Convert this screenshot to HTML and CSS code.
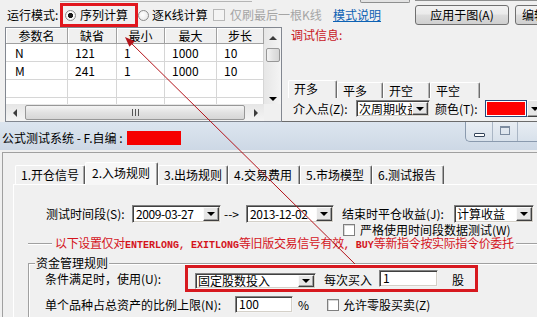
FILE: index.html
```html
<!DOCTYPE html>
<html lang="zh-CN">
<head>
<meta charset="utf-8">
<title>公式测试系统</title>
<link rel="stylesheet" href="styles.css">
</head>
<body>
<div class="screen">
  <div class="bgwin">
    <div class="topstrip">
      <span class="ts1"></span>
      <span class="ts2"></span>
      <span class="ts3"></span>
    </div>
    <div class="moderow">
      <span class="mode-lbl">运行模式:</span>
      <span class="hl-mode"><span class="radio on"></span><span class="radio-txt">序列计算</span></span>
      <span class="radio"></span><span class="txt-k">逐K线计算</span>
      <span class="check dis"></span><span class="txt-dis">仅刷最后一根K线</span>
      <span class="link">模式说明</span>
      <span class="btn btn-apply">应用于图(A)</span>
      <span class="btn btn-edit">编辑(E)</span>
    </div>
    <div class="mainrow">
      <div class="grid">
        <div class="g-top">
          <div class="g-cells">
            <div class="g-row g-head">
              <span class="c c1">参数名</span><span class="c c2">缺省</span><span class="c c3">最小</span><span class="c c4">最大</span><span class="c c5">步长</span>
            </div>
            <div class="g-row">
              <span class="c c1">N</span><span class="c c2">121</span><span class="c c3">1</span><span class="c c4">1000</span><span class="c c5">10</span>
            </div>
            <div class="g-row">
              <span class="c c1">M</span><span class="c c2">241</span><span class="c c3">1</span><span class="c c4">1000</span><span class="c c5">10</span>
            </div>
            <div class="g-row">
              <span class="c c1"></span><span class="c c2"></span><span class="c c3"></span><span class="c c4"></span><span class="c c5"></span>
            </div>
            <div class="g-row">
              <span class="c c1"></span><span class="c c2"></span><span class="c c3"></span><span class="c c4"></span><span class="c c5"></span>
            </div>
          </div>
          <div class="vscroll">
            <span class="sb-btn sb-up"><span class="tri up"></span></span>
            <span class="vthumb"></span>
            <span class="sb-fill"></span>
            <span class="sb-btn sb-down"><span class="tri down"></span></span>
          </div>
        </div>
        <div class="g-bottom">
          <div class="hscroll">
            <span class="sb-btn"><span class="tri left"></span></span>
            <span class="hthumb"><span class="grip"></span></span>
            <span class="sb-fill"></span>
            <span class="sb-btn"><span class="tri right"></span></span>
          </div>
          <span class="corner"></span>
        </div>
      </div>
      <div class="dbg">
        <div class="dbg-title">调试信息:</div>
        <div class="stabs">
          <span class="stab st1 sel">开多</span><span class="stab st2">平多</span><span class="stab st3">开空</span><span class="stab st4">平空</span>
        </div>
        <div class="dbg-row">
          <span class="lbl-jr">介入点(Z):</span>
          <span class="combo cb-jr"><span class="cb-text clip">次周期收益</span><span class="cb-btn"><span class="tri down"></span></span></span>
          <span class="lbl-color">颜色(T):</span>
          <span class="colorbox"><span class="swatch"></span></span>
          <span class="cb-btn solo"><span class="tri down"></span></span>
        </div>
      </div>
    </div>
  </div>

  <div class="dlg">
    <div class="titlebar">
      <div class="title"><span>公式测试系统 - F.自编 :</span><span class="title-red"></span></div>
      <div class="winbtns">
        <span class="wb wb-min"><i></i></span>
        <span class="wb wb-max"><i></i></span>
        <span class="wb wb-close"></span>
      </div>
    </div>
    <div class="dlg-body">
      <div class="frame">
        <div class="tabs">
          <span class="tab t1">1.开仓信号</span>
          <span class="tab t2 sel">2.入场规则</span>
          <span class="tab t3">3.出场规则</span>
          <span class="tab t4">4.交易费用</span>
          <span class="tab t5">5.市场模型</span>
          <span class="tab t6">6.测试报告</span>
        </div>
        <div class="panel">
          <div class="row-a">
            <span class="lbl-period">测试时间段(S):</span>
            <span class="combo cb-date1"><span class="cb-text num">2009-03-27</span><span class="cb-btn"><span class="tri down"></span></span></span>
            <span class="arrow-txt">--&gt;</span>
            <span class="combo cb-date2"><span class="cb-text num">2013-12-02</span><span class="cb-btn"><span class="tri down"></span></span></span>
            <span class="lbl-end">结束时平仓收益(J):</span>
            <span class="combo cb-end"><span class="cb-text">计算收益</span><span class="cb-btn"><span class="tri down"></span></span></span>
          </div>
          <div class="row-b">
            <span class="check"></span><span class="txt-strict">严格使用时间段数据测试(W)</span>
          </div>
          <div class="row-c">
            <span class="etch etch-l"></span>
            <span class="red-note">以下设置仅对<b class="lat">ENTERLONG, EXITLONG</b>等旧版交易信号有效<b class="lat">, BUY</b>等新指令按实际指令价委托</span>
            <span class="etch etch-r"></span>
          </div>
          <div class="group">
            <div class="group-title">资金管理规则</div>
            <div class="row-d">
              <span class="lbl-use">条件满足时，使用(U):</span>
              <div class="hl-money">
                <span class="combo cb-mode"><span class="cb-text">固定股数投入</span><span class="cb-btn"><span class="tri down"></span></span></span>
                <span class="txt-buy">每次买入</span>
                <span class="edit ed-qty">1</span>
                <span class="txt-gu">股</span>
              </div>
            </div>
            <div class="row-e">
              <span class="lbl-ratio">单个品种占总资产的比例上限(N):</span>
              <span class="edit ed-ratio">100</span>
              <span class="txt-pct">%</span>
              <span class="check ck-odd"></span>
              <span class="txt-odd">允许零股买卖(Z)</span>
            </div>
          </div>
        </div>
      </div>
    </div>
  </div>

  <svg class="arrow" width="537" height="317" viewBox="0 0 537 317">
    <line x1="355" y1="264" x2="130" y2="42" stroke="#b3141b" stroke-width="1"/>
    <polygon points="125,37 129.4,46.8 134.8,41.3" fill="#b3141b"/>
  </svg>
</div>
</body>
</html>
```
FILE: styles.css
```css
* { box-sizing: border-box; margin: 0; padding: 0; }
html, body { width: 537px; height: 317px; overflow: hidden; }
body {
  background: #f0f0f0;
  font: 12px/14px "Noto Sans CJK SC", "Noto Sans", sans-serif;
  color: #000;
}
.screen { position: relative; width: 537px; height: 317px; overflow: hidden; background: #f0f0f0; }

/* ---------- background window ---------- */
.bgwin { height: 122px; }
.topstrip { display: flex; height: 3px; }
.ts1 { flex: none; margin-left: 60px; width: 192px; height: 2px; border-bottom: 1px solid #b5b5b5; }
.ts2 { flex: none; margin-left: 108px; width: 50px; height: 3px; border: 1px solid #8e8f8f; border-top: 0; background: #e3e3e3; border-radius: 0 0 2px 2px; }
.ts3 { margin-left: 5px; flex: 1; height: 1px; border-bottom: 1px solid #8e8f8f; }

.moderow { display: flex; align-items: center; height: 24px; white-space: nowrap; }
.moderow > * { flex: none; }
.mode-lbl { margin-left: 7px; width: 53px; }
.hl-mode { display: flex; align-items: center; width: 78px; height: 24px; border: 3px solid #e1171e; padding-left: 2px; }
.radio {
  flex: none; width: 11px; height: 11px; border-radius: 50%;
  border: 1px solid #8b8b8b;
  background: radial-gradient(circle at 40% 40%, #ffffff, #e4e4e4);
}
.radio.on { background: radial-gradient(circle, #1b1b1b 0 2.3px, #ffffff 2.9px, #e4e4e4); }
.radio-txt { margin-left: 4px; }
.txt-k { margin-left: 3px; width: 61px; }
.check { flex: none; width: 12px; height: 12px; border: 1px solid #7f7f7f; background: #fff; box-shadow: inset 1px 1px 0 #d8d8d8; }
.check.dis { border-color: #b8b8b8; background: #f4f4f4; box-shadow: none; }
.txt-dis { margin-left: 5px; width: 103px; color: #a5a5a5; }
.link { width: 82px; color: #0d62b4; text-decoration: underline; }
.btn {
  display: flex; align-items: center; justify-content: center;
  height: 20px; border: 1px solid #707070; border-radius: 3px;
  background: linear-gradient(#f2f2f2, #ebebeb 45%, #dddddd 50%, #cfcfcf);
}
.btn-apply { width: 94px; }
.btn-edit { margin-left: 6px; width: 60px; justify-content: flex-start; padding-left: 6px; }

.mainrow { display: flex; height: 95px; }
.grid { flex: none; margin-left: 5px; width: 277px; height: 95px; border: 1px solid #828790; display: flex; flex-direction: column; background: #fff; }
.g-top { display: flex; height: 76px; }
.g-cells { flex: none; width: 258px; overflow: hidden; }
.g-row { display: flex; height: 18px; }
.c {
  flex: none; height: 100%;
  border-right: 1px solid #d6d6d6; border-bottom: 1px solid #d6d6d6;
  padding-left: 7px; line-height: 17px; white-space: nowrap;
}
.c1 { width: 62px; padding-left: 9px; }
.c2 { width: 49px; }
.c3 { width: 48px; }
.c4 { width: 52px; }
.c5 { width: 47px; }
.g-head { height: 16px; }
.g-head .c {
  background: #f0f0f0; box-shadow: inset 1px 1px 0 #fff;
  border-right: 1px solid #a0a0a0; border-bottom: 1px solid #a0a0a0;
  padding: 0; text-align: center; line-height: 15px;
}

.vscroll { flex: none; width: 17px; display: flex; flex-direction: column; background: linear-gradient(90deg, #e6e6e6, #f4f4f4); }
.sb-btn { flex: none; width: 17px; height: 17px; display: flex; align-items: center; justify-content: center; }
.sb-up { padding-top: 3px; }
.sb-down { padding-top: 6px; }
.vthumb {
  flex: none; margin: 3px 1px 0 2px; height: 14px;
  border: 1px solid #979797; border-radius: 2px;
  background: linear-gradient(90deg, #f4f4f4, #e2e2e2 50%, #d6d6d6);
}
.sb-fill { flex: 1; }
.g-bottom { display: flex; height: 17px; }
.hscroll { flex: none; width: 258px; display: flex; background: linear-gradient(#e6e6e6, #f4f4f4); }
.hthumb {
  flex: none; margin: 1px 0 0 2px; width: 220px; height: 15px;
  border: 1px solid #979797; border-radius: 2px;
  background: linear-gradient(#f4f4f4, #e2e2e2 50%, #d6d6d6);
  display: flex; align-items: center; justify-content: center;
}
.grip { width: 7px; height: 7px; background: repeating-linear-gradient(90deg, #555 0 1px, transparent 1px 3px); }
.corner { flex: none; width: 17px; background: #f0f0f0; }

.tri { width: 0; height: 0; display: block; }
.tri.up { border-left: 4px solid transparent; border-right: 4px solid transparent; border-bottom: 4px solid #3c3c3c; }
.tri.down { border-left: 4px solid transparent; border-right: 4px solid transparent; border-top: 4px solid #000; }
.tri.left { border-top: 4px solid transparent; border-bottom: 4px solid transparent; border-right: 4px solid #3c3c3c; }
.tri.right { border-top: 4px solid transparent; border-bottom: 4px solid transparent; border-left: 4px solid #3c3c3c; }

.dbg { flex: 1; height: 95px; border-bottom: 1px solid #6b6b6b; }
.dbg-title { margin-top: 1px; padding-left: 9px; color: #c8161d; }
.stabs { display: flex; align-items: flex-end; height: 18px; margin-top: 38px; padding-left: 6px; }
.stab {
  flex: none; height: 16px; border-left: 1px solid #fff; border-top: 1px solid #fff;
  border-right: 1px solid #6e6e6e; box-shadow: inset -1px 0 0 #b4b4b4;
  border-radius: 2px 2px 0 0; padding-left: 5px; line-height: 15px;
}
.stab.sel { height: 18px; line-height: 16px; }
.st1 { width: 49px; }
.st2 { width: 46px; }
.st3 { width: 47px; }
.st4 { width: 50px; }
.dbg-row { display: flex; align-items: center; height: 19px; margin-top: 1px; white-space: nowrap; }
.dbg-row > * { flex: none; }
.lbl-jr { margin-left: 11px; width: 63px; }
.lbl-color { margin-left: 5px; width: 50px; }
.cb-jr { width: 74px; height: 17px; }
.colorbox { width: 42px; height: 17px; border: 1px solid #24477a; padding: 1px; background: #fff; display: flex; }
.swatch { flex: 1; background: #ff0000; }
.cb-btn.solo { height: 17px; }

/* ---------- controls ---------- */
.combo {
  display: flex; flex: none; background: #fff; overflow: hidden;
  border: 1px solid; border-color: #828282 #f4f4f4 #f4f4f4 #828282;
  box-shadow: inset 1px 1px 0 #404040, inset -1px -1px 0 #d4d0c8;
  padding: 1px;
}
.cb-text { flex: 1; min-width: 0; white-space: nowrap; padding-left: 1px; line-height: 13px; }
.cb-text.clip { overflow: hidden; }
.cb-text.num { letter-spacing: -0.4px; }
.cb-btn {
  flex: none; width: 16px; display: flex; align-items: center; justify-content: center;
  background: #e6e6e6; border: 1px solid; border-color: #fafafa #404040 #404040 #fafafa;
  box-shadow: inset -1px -1px 0 #a0a0a0;
}
.edit {
  flex: none; background: #fff; padding-left: 3px; line-height: 14px;
  border: 1px solid; border-color: #828282 #f4f4f4 #f4f4f4 #828282;
  box-shadow: inset 1px 1px 0 #404040, inset -1px -1px 0 #d4d0c8;
}

/* ---------- dialog ---------- */
.dlg { position: absolute; left: 0; top: 122px; width: 537px; height: 195px; background: #f0f0f0; display: flex; flex-direction: column; }
.titlebar { flex: none; display: flex; height: 28px; background: linear-gradient(#dce5ef, #cdd8e5); }
.title { flex: none; display: flex; align-items: center; padding: 3px 0 0 2px; white-space: nowrap; }
.title-red { width: 54px; height: 14px; background: #f60000; margin-left: 4px; }
.winbtns {
  flex: none; margin-left: auto; display: flex; width: 72px; height: 20px;
  border: 1px solid #8a9aae; border-top: 0; border-right: 0; border-radius: 0 0 0 5px;
  background: linear-gradient(#e8edf3, #d8e1eb);
}
.wb { flex: none; display: flex; align-items: center; justify-content: center; border-right: 1px solid #aab6c5; }
.wb i { display: block; }
.wb-min { width: 27px; }
.wb-min i { width: 11px; height: 4px; border: 1px solid #33445a; border-radius: 1px; background: #fff; margin-top: 6px; }
.wb-max { width: 25px; }
.wb-max i { width: 10px; height: 9px; border: 1px solid #7d8ca0; border-top-width: 2px; margin-top: -2px; }
.wb-close { flex: 1; border-right: 0; }

.dlg-body { flex: 1; padding: 2px 0 0 2px; }
.frame { height: 100%; border-top: 1px solid #a0a0a0; border-left: 1px solid #a0a0a0; padding-top: 9px; }
.tabs { display: flex; align-items: flex-end; height: 22px; padding-left: 12px; }
.tab {
  flex: none; height: 19px; padding-left: 5px; line-height: 18px; white-space: nowrap;
  border-left: 1px solid #fff; border-top: 1px solid #fff;
  border-right: 1px solid #5a5a5a; box-shadow: inset -1px 0 0 #a8a8a8;
  border-radius: 2px 2px 0 0;
}
.tab.sel { position: relative; z-index: 1; height: 23px; margin-bottom: -1px; background: #f7f7f7; padding-left: 6px; line-height: 19px; }
.t1 { width: 70px; }
.t2 { width: 73px; }
.t3 { width: 70px; }
.t4 { width: 72px; }
.t5 { width: 72px; }
.t6 { width: 72px; }
.panel { margin-left: 10px; height: 200px; border-top: 1px solid #fff; border-left: 1px solid #fff; background: #f0f0f0; }

.row-a { display: flex; align-items: center; height: 18px; margin-top: 20px; padding-left: 32px; white-space: nowrap; }
.row-a > * { flex: none; }
.lbl-period { width: 86px; }
.cb-date1 { width: 89px; height: 18px; }
.arrow-txt { width: 25px; padding-left: 3px; }
.cb-date2 { width: 88px; height: 18px; }
.lbl-end { margin-left: 8px; width: 112px; }
.cb-end { width: 80px; height: 18px; }
.cb-date1 .cb-text, .cb-date2 .cb-text { padding-left: 2px; }

.row-b { display: flex; align-items: center; height: 13px; padding-left: 329px; white-space: nowrap; line-height: 13px; }
.txt-strict { margin-left: 5px; line-height: 13px; }

.row-c { display: flex; align-items: center; height: 14px; margin-top: 1px; white-space: nowrap; }
.etch { flex: none; height: 2px; border-top: 1px solid #a0a0a0; border-bottom: 1px solid #fff; }
.etch-l { margin-left: 14px; width: 24px; }
.etch-r { margin-left: 2px; flex: 1; }
.red-note { flex: none; margin-left: 3px; color: #d4141c; letter-spacing: -0.35px; }
.lat { font: bold 10px/14px "Liberation Mono", monospace; letter-spacing: 0; }

.group { margin: 12px 0 0 14px; border-top: 1px solid #a0a0a0; border-left: 1px solid #a0a0a0; box-shadow: inset 1px 1px 0 #fff; height: 80px; }
.group-title { width: fit-content; margin: -8px 0 -6px 6px; padding: 0 1px; background: #f0f0f0; line-height: 14px; }
.row-d { display: flex; align-items: center; height: 27px; margin-top: 1px; white-space: nowrap; }
.row-d > * { flex: none; }
.lbl-use { margin-left: 16px; width: 140px; }
.hl-money { display: flex; align-items: flex-start; width: 293px; height: 27px; border: 3px solid #d7191f; }
.cb-mode { width: 121px; height: 16px; margin: 5px 0 0 7px; }
.cb-mode .cb-text { line-height: 12px; }
.txt-buy { flex: none; margin: 5px 0 0 8px; width: 48px; }
.ed-qty { width: 59px; height: 17px; margin: 2px 0 0 7px; }
.txt-gu { flex: none; margin: 5px 0 0 14px; }

.row-e { display: flex; align-items: center; height: 17px; margin-top: 4px; white-space: nowrap; }
.row-e > * { flex: none; }
.lbl-ratio { margin-left: 16px; width: 190px; }
.ed-ratio { width: 58px; height: 17px; }
.txt-pct { margin-left: 5px; width: 6px; }
.ck-odd { margin-left: 23px; }
.txt-odd { margin-left: 4px; }

.arrow { position: absolute; left: 0; top: 0; pointer-events: none; }
```
